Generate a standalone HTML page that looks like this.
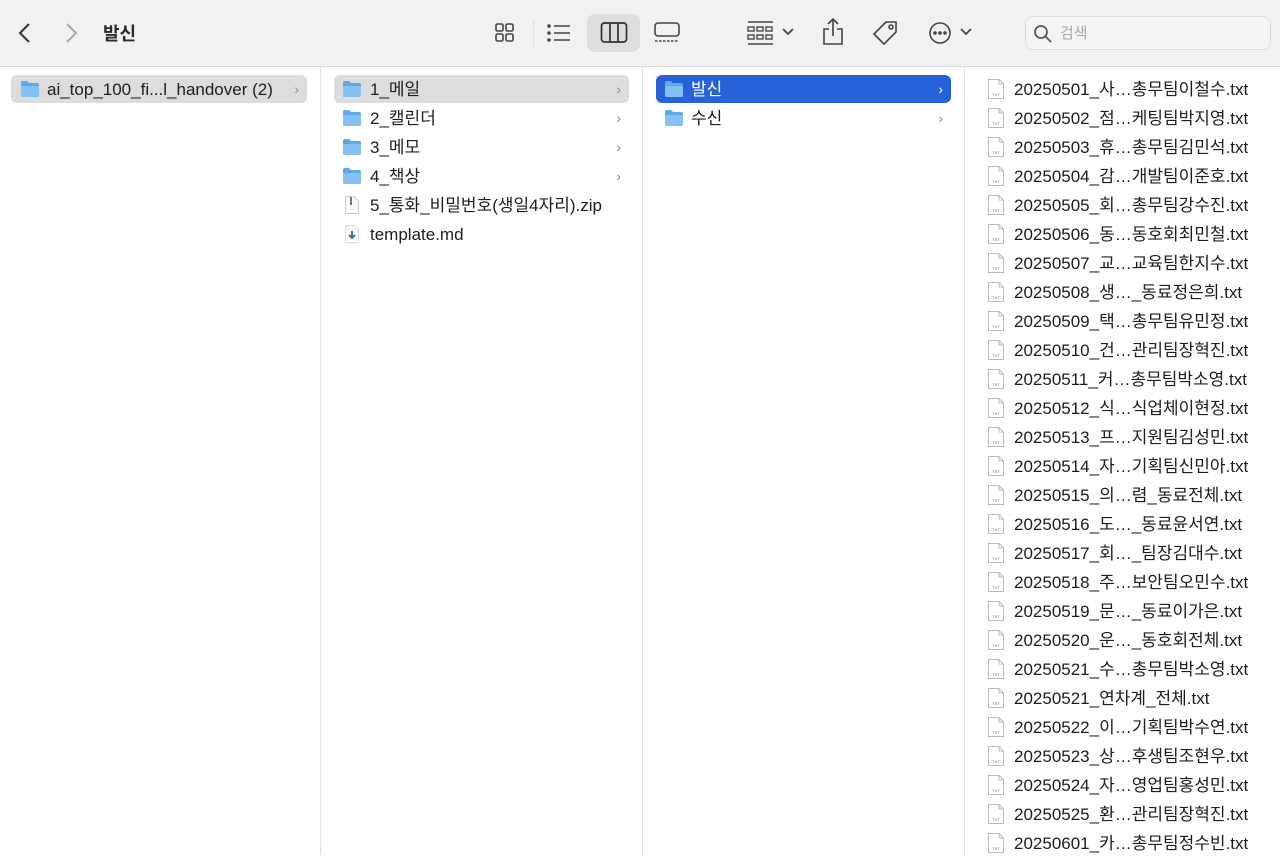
<!DOCTYPE html>
<html><head><meta charset="utf-8"><style>
*{margin:0;padding:0;box-sizing:border-box}
body{width:1280px;height:855px;overflow:hidden;background:#fff;font-family:"Liberation Sans","Noto Sans CJK KR",sans-serif;color:#1d1d1d;position:relative}
.tb{position:absolute;left:0;top:0;width:1280px;height:67px;background:#f1f1f1;border-bottom:1px solid #dcdcdc}
.title{position:absolute;left:103px;top:20px;font-size:18px;font-weight:bold;color:#2a2a2a}
.ic{position:absolute}
.col{position:absolute;top:67px;bottom:0;border-right:1px solid #e2e2e2}
.row{position:absolute;height:28px;font-size:17px;line-height:30px;white-space:nowrap}
.sel{background:#dcdcdc;border-radius:6px}
.blue{background:#2862d9;color:#fff;border-radius:6px}
.chev{position:absolute;top:0;font-size:14px;color:#8a8a8a;line-height:28px}
.blue .chev{color:#fff}
.search{position:absolute;left:1025px;top:16px;width:246px;height:34px;border:1px solid #dcdcdc;border-radius:8px;background:#f4f4f4;font-size:15px;color:#a8a8a8;line-height:34px;padding-left:34px}
</style></head><body>
<div class="tb">
<svg class="ic" style="left:16px;top:22px" width="20" height="22"><path d="M13 2 L4 11 L13 20" fill="none" stroke="#333" stroke-width="2"/></svg>
<svg class="ic" style="left:62px;top:22px" width="20" height="22"><path d="M5 2 L14 11 L5 20" fill="none" stroke="#aaa" stroke-width="2"/></svg>
<div class="title">발신</div>
<svg class="ic" style="left:494px;top:22px" width="22" height="22" fill="none" stroke="#444" stroke-width="1.6"><rect x="2" y="2" width="7" height="7" rx="1.5"/><rect x="12" y="2" width="7" height="7" rx="1.5"/><rect x="2" y="12" width="7" height="7" rx="1.5"/><rect x="12" y="12" width="7" height="7" rx="1.5"/></svg>
<div class="ic" style="left:533px;top:20px;width:1px;height:26px;background:#ddd"></div>
<svg class="ic" style="left:546px;top:22px" width="26" height="22" stroke="#444" stroke-width="1.6"><circle cx="3" cy="4" r="1" fill="#444"/><circle cx="3" cy="11" r="1" fill="#444"/><circle cx="3" cy="18" r="1" fill="#444"/><path d="M8 4H24M8 11H24M8 18H24"/></svg>
<div class="ic" style="left:587px;top:14px;width:53px;height:38px;background:#dedede;border-radius:8px"></div>
<svg class="ic" style="left:600px;top:21px" width="28" height="24" fill="none" stroke="#333" stroke-width="1.7"><rect x="1.5" y="2" width="25" height="19" rx="3"/><path d="M10 2V21M18 2V21"/></svg>
<svg class="ic" style="left:653px;top:21px" width="28" height="24" fill="none" stroke="#444" stroke-width="1.6"><rect x="2" y="2" width="24" height="13" rx="3"/><path d="M2 20H26" stroke-dasharray="2.5 1.5"/></svg>
<svg class="ic" style="left:747px;top:20px" width="28" height="26" fill="none" stroke="#444" stroke-width="1.4"><path d="M1 2H26M1 24H26"/><rect x="1" y="7" width="6" height="4"/><rect x="10" y="7" width="6" height="4"/><rect x="19" y="7" width="6" height="4"/><rect x="1" y="15" width="6" height="4"/><rect x="10" y="15" width="6" height="4"/><rect x="19" y="15" width="6" height="4"/></svg>
<svg class="ic" style="left:781px;top:27px" width="14" height="10" fill="none" stroke="#444" stroke-width="1.8"><path d="M2 2L7 7L12 2"/></svg>
<svg class="ic" style="left:821px;top:17px" width="24" height="30" fill="none" stroke="#444" stroke-width="1.6"><path d="M12 2V19M7 7L12 2L17 7M8 12H3V27H21V12H16"/></svg>
<svg class="ic" style="left:870px;top:19px" width="30" height="28" fill="none" stroke="#444" stroke-width="1.6"><path d="M4 15L16 3H26V13L14 25Z" stroke-linejoin="round"/><circle cx="21" cy="8" r="2"/></svg>
<svg class="ic" style="left:928px;top:21px" width="26" height="26" fill="none" stroke="#444" stroke-width="1.6"><circle cx="12" cy="12" r="10"/><circle cx="7" cy="12" r="1" fill="#444"/><circle cx="12" cy="12" r="1" fill="#444"/><circle cx="17" cy="12" r="1" fill="#444"/></svg>
<svg class="ic" style="left:959px;top:27px" width="14" height="10" fill="none" stroke="#444" stroke-width="1.8"><path d="M2 2L7 7L12 2"/></svg>
<div class="search">검색</div>
<svg class="ic" style="left:1033px;top:24px" width="20" height="20" fill="none" stroke="#555" stroke-width="1.7"><circle cx="8" cy="8" r="6"/><path d="M12.5 12.5L18 18"/></svg>
</div>

<svg width="0" height="0" style="position:absolute"><defs>
<symbol id="fd" viewBox="0 0 20 18"><path d="M1 3Q1 1 3 1H7L9 3H17Q19 3 19 5V15Q19 17 17 17H3Q1 17 1 15Z" fill="#5fa8e6"/><path d="M1 6H19V15Q19 17 17 17H3Q1 17 1 15Z" fill="#84c1f2"/></symbol>
<symbol id="tx" viewBox="0 0 18 22"><path d="M1.5 1.5H12L16.5 6V20.5H1.5Z" fill="#fff" stroke="#bbb"/><path d="M12 1.5V6H16.5" fill="none" stroke="#bbb"/><text x="9" y="18" font-size="4" text-anchor="middle" fill="#666" font-family="Liberation Sans">TXT</text></symbol>
</defs></svg>

<div class="col" style="left:0;width:321px">
<div class="row sel" style="left:11px;top:8px;width:296px"><svg style="position:absolute;left:9px;top:5px" width="20" height="18"><use href="#fd"/></svg><span style="position:absolute;left:36px">ai_top_100_fi...l_handover (2)</span><span class="chev" style="right:8px">›</span></div>
</div>
<div class="col" style="left:321px;width:322px">
<div class="row sel" style="left:13px;top:8px;width:295px"><svg style="position:absolute;left:8px;top:5px" width="20" height="18"><use href="#fd"/></svg><span style="position:absolute;left:36px">1_메일</span><span class="chev" style="right:8px">›</span></div>
<div class="row" style="left:13px;top:37px;width:295px"><svg style="position:absolute;left:8px;top:5px" width="20" height="18"><use href="#fd"/></svg><span style="position:absolute;left:36px">2_캘린더</span><span class="chev" style="right:8px">›</span></div>
<div class="row" style="left:13px;top:66px;width:295px"><svg style="position:absolute;left:8px;top:5px" width="20" height="18"><use href="#fd"/></svg><span style="position:absolute;left:36px">3_메모</span><span class="chev" style="right:8px">›</span></div>
<div class="row" style="left:13px;top:95px;width:295px"><svg style="position:absolute;left:8px;top:5px" width="20" height="18"><use href="#fd"/></svg><span style="position:absolute;left:36px">4_책상</span><span class="chev" style="right:8px">›</span></div>
<div class="row" style="left:13px;top:124px;width:295px"><svg style="position:absolute;left:10px;top:4px" width="16" height="20"><path d="M1.5 1.5H10L14.5 6V18.5H1.5Z" fill="#fafafa" stroke="#ccc"/><rect x="6" y="2" width="2" height="8" fill="#777"/></svg><span style="position:absolute;left:36px">5_통화_비밀번호(생일4자리).zip</span></div>
<div class="row" style="left:13px;top:153px;width:295px"><svg style="position:absolute;left:10px;top:4px" width="16" height="20"><path d="M1.5 1.5H10L14.5 6V18.5H1.5Z" fill="#fafafa" stroke="#ddd"/><path d="M8 7V14M5 11L8 14L11 11" stroke="#3a6f9a" stroke-width="2" fill="none"/></svg><span style="position:absolute;left:36px">template.md</span></div>
</div>
<div class="col" style="left:643px;width:322px">
<div class="row blue" style="left:13px;top:8px;width:295px"><svg style="position:absolute;left:8px;top:5px" width="20" height="18"><use href="#fd"/></svg><span style="position:absolute;left:35px">발신</span><span class="chev" style="right:8px">›</span></div>
<div class="row" style="left:13px;top:37px;width:295px"><svg style="position:absolute;left:8px;top:5px" width="20" height="18"><use href="#fd"/></svg><span style="position:absolute;left:35px">수신</span><span class="chev" style="right:8px">›</span></div>
</div>
<div id="c4" style="position:absolute;left:965px;top:67px;width:315px;bottom:0"></div>
<script>
var f=["20250501_사…총무팀이철수.txt","20250502_점…케팅팀박지영.txt","20250503_휴…총무팀김민석.txt","20250504_감…개발팀이준호.txt","20250505_회…총무팀강수진.txt","20250506_동…동호회최민철.txt","20250507_교…교육팀한지수.txt","20250508_생…_동료정은희.txt","20250509_택…총무팀유민정.txt","20250510_건…관리팀장혁진.txt","20250511_커…총무팀박소영.txt","20250512_식…식업체이현정.txt","20250513_프…지원팀김성민.txt","20250514_자…기획팀신민아.txt","20250515_의…렴_동료전체.txt","20250516_도…_동료윤서연.txt","20250517_회…_팀장김대수.txt","20250518_주…보안팀오민수.txt","20250519_문…_동료이가은.txt","20250520_운…_동호회전체.txt","20250521_수…총무팀박소영.txt","20250521_연차계_전체.txt","20250522_이…기획팀박수연.txt","20250523_상…후생팀조현우.txt","20250524_자…영업팀홍성민.txt","20250525_환…관리팀장혁진.txt","20250601_카…총무팀정수빈.txt"];
var h="";f.forEach(function(s,i){var t=8+i*29;h+='<div class="row" style="left:0;top:'+t+'px;width:315px"><svg style="position:absolute;left:22px;top:3px" width="18" height="22"><use href="#tx"/></svg><span style="position:absolute;left:49px">'+s+'</span></div>';});
document.getElementById("c4").innerHTML=h;
</script>
</body></html>
